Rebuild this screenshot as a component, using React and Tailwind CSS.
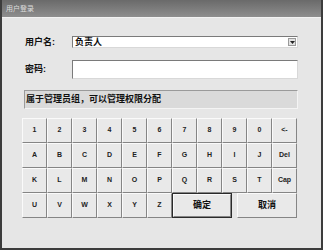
import React from 'react';

const rows = [
  ['1', '2', '3', '4', '5', '6', '7', '8', '9', '0', '<-'],
  ['A', 'B', 'C', 'D', 'E', 'F', 'G', 'H', 'I', 'J', 'Del'],
  ['K', 'L', 'M', 'N', 'O', 'P', 'Q', 'R', 'S', 'T', 'Cap'],
];

const lastRow = ['U', 'V', 'W', 'X', 'Y', 'Z'];

const Key = ({ label }) => (
  <div className="w-[25px] h-[25px] flex items-center justify-center bg-[#e9e9e9] border border-t-[#fafafa] border-l-[#fafafa] border-r-[#858585] border-b-[#858585] text-[7px] font-bold text-[#222]">
    {label}
  </div>
);

const App = () => {
  return (
    <div
      className="w-[323px] h-[250px] flex flex-col bg-[#e6e6e6] border-2 border-[#3c3c3c] border-t-0 text-[#111]"
      style={{ fontFamily: '"Liberation Sans", "Noto Sans CJK SC", sans-serif' }}
    >
      {/* Title bar */}
      <div className="h-[18px] bg-gradient-to-b from-[#6a6a6a] to-[#8e8e8e] border-b border-[#f2f2f2] flex items-center pl-[4px] text-[7px] text-[#dcdcdc] leading-none">
        用户登录
      </div>

      <div className="flex flex-col pl-[20px]">
        {/* Username */}
        <div className="flex items-center mt-[18px] h-[12px]">
          <span className="w-[50px] pl-[3px] text-[9px] font-bold leading-none">用户名:</span>
          <div className="w-[226px] h-[12px] bg-white border border-t-[#7a7a7a] border-l-[#7a7a7a] border-r-[#d8d8d8] border-b-[#d8d8d8] flex items-center justify-between pl-[2px] pr-[1px]">
            <span className="text-[9px] font-bold leading-none">负责人</span>
            <div className="w-[8px] h-[8px] bg-[#e2e2e2] border border-[#9a9a9a] flex items-center justify-center">
              <svg width="5" height="3" viewBox="0 0 5 3">
                <path d="M0 0h5L2.5 3z" fill="#222" />
              </svg>
            </div>
          </div>
        </div>

        {/* Password */}
        <div className="flex items-center mt-[12px] h-[19px]">
          <span className="w-[50px] pl-[3px] text-[9px] font-bold leading-none">密码:</span>
          <div className="w-[226px] h-[19px] bg-white border border-t-[#7a7a7a] border-l-[#7a7a7a] border-r-[#d8d8d8] border-b-[#d8d8d8]" />
        </div>

        {/* Info */}
        <div className="mt-[11px] ml-[2px] w-[274px] h-[19px] bg-[#dadada] border border-t-[#9a9a9a] border-l-[#9a9a9a] border-r-[#f4f4f4] border-b-[#f4f4f4] flex items-center pl-[1px] text-[9px] font-bold leading-none">
          属于管理员组，可以管理权限分配
        </div>

        {/* Keyboard */}
        <div className="mt-[9px] flex flex-col">
          {rows.map((row, i) => (
            <div key={i} className="flex">
              {row.map((k) => (
                <Key key={k} label={k} />
              ))}
            </div>
          ))}
          <div className="flex">
            {lastRow.map((k) => (
              <Key key={k} label={k} />
            ))}
            <div className="w-[60px] h-[25px] border border-[#2a2a2a]">
              <div className="w-full h-full bg-[#e9e9e9] border border-t-[#fafafa] border-l-[#fafafa] border-r-[#858585] border-b-[#858585] flex items-center justify-center text-[9px] font-bold leading-none">
                确定
              </div>
            </div>
            <div className="ml-[5px] w-[60px] h-[25px] bg-[#e9e9e9] border border-t-[#fafafa] border-l-[#fafafa] border-r-[#858585] border-b-[#858585] flex items-center justify-center text-[9px] font-bold leading-none">
              取消
            </div>
          </div>
        </div>
      </div>
    </div>
  );
};

export default App;
